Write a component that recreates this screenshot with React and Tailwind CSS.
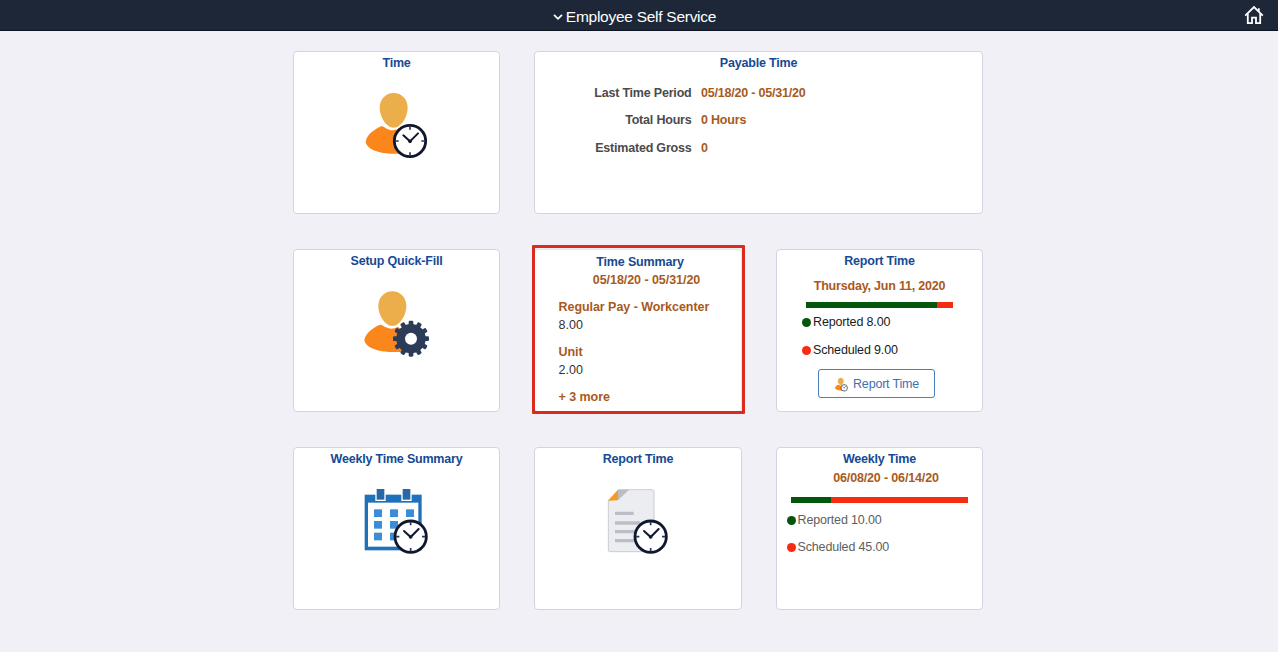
const titleClass =
  "text-center text-[12.5px] leading-4 font-bold tracking-[-0.2px] text-[#164a94]";

const accentClass = "text-[12.5px] font-bold text-[#a85a1c]";

const iconClass = "mx-auto block h-[72px] w-[70px]";

const PAYABLE_ROWS = [
  { label: "Last Time Period", value: "05/18/20 - 05/31/20" },
  { label: "Total Hours", value: "0 Hours" },
  { label: "Estimated Gross", value: "0" },
];

const SUMMARY_ROWS = [
  { label: "Regular Pay - Workcenter", value: "8.00" },
  { label: "Unit", value: "2.00" },
];

const GEAR_TEETH = Array.from({ length: 12 }, (_, i) => i * 30);

function Clock({ cx, cy }) {
  return (
    <g transform={`translate(${cx} ${cy})`} stroke="#10182f" fill="none">
      <circle r="47" fill="#fff" strokeWidth="8.5" />
      <path
        d="M0 -44v10M0 44v-10M-44 0h10M44 0h-10"
        stroke="#2a3756"
        strokeWidth="5"
      />
      <path d="M-20 -17L0 1L24 -23" strokeWidth="6" strokeLinecap="round" />
      <circle r="5.5" cy="1" fill="#10182f" stroke="none" />
    </g>
  );
}

function Person({ x = 0, y = 0 }) {
  return (
    <g transform={`translate(${x} ${y})`}>
      <path
        d="M94 139C70 149 50 166 47 185C50 208 88 221 131 221H168V152C158 150 151 149 146 145C136 153 122 152 112 147C105 144 100 138 94 139Z"
        fill="#fb861c"
      />
      <path
        d="M131 39C155 39 173 58 173 83C173 109 154 143 131 143C108 143 89 109 89 83C89 58 107 39 131 39Z"
        fill="#ecae4a"
        stroke="#fff"
        strokeWidth="7"
        paintOrder="stroke"
      />
    </g>
  );
}

function PersonClockIcon({ className = iconClass }) {
  return (
    <svg viewBox="36 27 210 216" className={className}>
      <Person />
      <Clock cx={180} cy={183} />
    </svg>
  );
}

function PersonGearIcon() {
  return (
    <svg viewBox="36 27 210 216" className={iconClass}>
      <Person x={-4} y={-5} />
      <g transform="translate(183 176)" fill="#2b3b58">
        <circle r="44" />
        {GEAR_TEETH.map((angle) => (
          <rect
            key={angle}
            x="-7"
            y="-54"
            width="14"
            height="16"
            rx="4"
            transform={`rotate(${angle})`}
          />
        ))}
        <circle r="18" fill="#fff" />
      </g>
    </svg>
  );
}

function CalendarClockIcon() {
  return (
    <svg viewBox="36 27 210 216" className={iconClass}>
      <rect x="44" y="50" width="171" height="167" fill="#1f71ba" />
      <rect x="54" y="74" width="151" height="132" fill="#fff" />
      {[80, 158].map((x) => (
        <rect
          key={x}
          x={x - 2}
          y="31"
          width="27"
          height="36"
          fill="#2768a6"
          stroke="#fff"
          strokeWidth="4"
        />
      ))}
      {[94, 129, 164].map((y) =>
        [72, 120, 168].map((x) => (
          <rect key={`${x}-${y}`} x={x} y={y} width="24" height="23" fill="#3a8dd6" />
        )),
      )}
      <Clock cx={182} cy={176} />
    </svg>
  );
}

function DocumentClockIcon() {
  return (
    <svg viewBox="39 27 210 216" className={iconClass}>
      <path
        d="M86 35H187Q192 35 192 40V216Q192 221 187 221H60Q55 221 55 216V68Z"
        fill="#ecedf1"
        stroke="#c9cdd5"
        strokeWidth="3"
      />
      <path d="M84 35H117L84 67Z" fill="#b9bdc6" />
      <path d="M54 68L84 35V67Z" fill="#f69a24" />
      <path
        d="M75 106H131M75 135H150M75 161H140M75 188H140"
        stroke="#bbbec7"
        strokeWidth="10"
      />
      <Clock cx={182} cy={176} />
    </svg>
  );
}

function Tile({ title, className = "", children }) {
  return (
    <section
      className={`relative h-[163px] rounded-[4px] border border-[#d3d5de] bg-white pt-[3px] ${className}`}
    >
      <h2 className={titleClass}>{title}</h2>
      {children}
    </section>
  );
}

function StatusBar({ reported, className }) {
  return (
    <div className={`h-1.5 bg-[#f52c12] ${className}`}>
      <div className="h-full bg-[#04560a]" style={{ width: `${reported}%` }} />
    </div>
  );
}

function Legend({ color, className = "", children }) {
  return (
    <div
      className={`flex items-center gap-0.5 text-[12.5px] leading-4 tracking-[-0.15px] ${className}`}
    >
      <span className={`size-[9px] shrink-0 rounded-full ${color}`} />
      {children}
    </div>
  );
}

export default function App() {
  return (
    <div className="h-[652px] w-[1278px] overflow-hidden bg-[#f0f0f6] font-['Liberation_Sans',Arial,sans-serif]">
      <header className="grid h-[31px] grid-cols-[1fr_auto_1fr] items-center border-b border-[#0c1422] bg-[#1d2737]">
        <span />
        <div className="flex items-center gap-[3px] pt-[3px] pr-[9px] text-[15.5px] leading-5 tracking-[-0.27px] text-white">
          <svg viewBox="0 0 10 6" className="h-1.5 w-2.5">
            <path
              d="M1 0.8L5 4.8L9 0.8"
              fill="none"
              stroke="#fff"
              strokeWidth="1.7"
            />
          </svg>
          <h1>Employee Self Service</h1>
        </div>
        <svg
          viewBox="0 0 20 20"
          className="mr-3.5 size-5 justify-self-end"
          fill="none"
          stroke="#fff"
          strokeWidth="1.8"
        >
          <path d="M1.2 10.6L10 2L18.8 10.6" />
          <path d="M3.8 8.5V18.2H8V12.6H12V18.2H16.2V8.5M14.8 6.2V3.2" />
        </svg>
      </header>

      <main className="ml-[293px] grid w-[690px] grid-cols-[207px_208px_207px] gap-x-[34px] gap-y-[35px] pt-5">
        <Tile title="Time">
          <div className="pt-[18px]">
            <PersonClockIcon />
          </div>
        </Tile>

        <Tile title="Payable Time" className="col-span-2">
          <dl className="mt-[9px] grid grid-cols-[156.5px_1fr] gap-x-[9.5px] text-[12.5px] leading-[27.3px] font-bold tracking-[-0.2px]">
            {PAYABLE_ROWS.map((row) => (
              <div key={row.label} className="contents">
                <dt className="text-right text-[#4b4b4b]">{row.label}</dt>
                <dd className="text-[#a85a1c]">{row.value}</dd>
              </div>
            ))}
          </dl>
        </Tile>

        <Tile title="Setup Quick-Fill">
          <div className="pt-5">
            <PersonGearIcon />
          </div>
        </Tile>

        <section className="relative h-[163px] rounded-[4px] border border-[#e4e4ec] bg-white pt-[3px] text-[12.5px] leading-[18px]">
          <h2 className="pl-1 text-center font-bold tracking-[-0.15px] text-[#164a94]">
            Time Summary
          </h2>
          <p className={`${accentClass} pl-[17px] text-center tracking-[-0.05px]`}>
            05/18/20 - 05/31/20
          </p>
          <div className="space-y-[9px] pt-[9px] pl-[23.5px]">
            {SUMMARY_ROWS.map((row) => (
              <div key={row.label}>
                <p className={`${accentClass} tracking-[-0.05px]`}>{row.label}</p>
                <p className="text-[#333]">{row.value}</p>
              </div>
            ))}
            <p className={`${accentClass} tracking-[-0.05px]`}>+ 3 more</p>
          </div>
          <div className="absolute -top-[5px] -right-1 -bottom-[3px] -left-[3px] rounded-[1px] border-[3px] border-[#d92b1e]" />
        </section>

        <Tile title="Report Time">
          <p className={`${accentClass} mt-[8.5px] text-center leading-4 tracking-[-0.2px]`}>
            Thursday, Jun 11, 2020
          </p>
          <StatusBar reported={89} className="mt-[8.5px] ml-[29px] w-[147px]" />
          <Legend color="bg-[#04560a]" className="mt-1.5 ml-[25px] text-[#1a1a1a]">
            Reported 8.00
          </Legend>
          <Legend color="bg-[#f52c12]" className="mt-3 ml-[25px] text-[#1a1a1a]">
            Scheduled 9.00
          </Legend>
          <button className="mt-[11px] ml-[41px] flex h-[29px] w-[117px] items-center justify-center gap-1 rounded-[3px] border border-[#4c7dbc] pt-px text-[12.5px] tracking-[-0.2px] text-[#3f6fae]">
            <PersonClockIcon className="h-[15px] w-[15px]" />
            Report Time
          </button>
        </Tile>

        <Tile title="Weekly Time Summary">
          <div className="pt-5">
            <CalendarClockIcon />
          </div>
        </Tile>

        <Tile title="Report Time">
          <div className="pt-5">
            <DocumentClockIcon />
          </div>
        </Tile>

        <Tile title="Weekly Time">
          <p className={`${accentClass} mt-[2.5px] pl-[13px] text-center leading-4 tracking-[-0.15px]`}>
            06/08/20 - 06/14/20
          </p>
          <StatusBar reported={22.5} className="mt-[11.5px] ml-3.5 w-[177px]" />
          <Legend color="bg-[#04560a]" className="mt-[9px] ml-[9.5px] text-[#606060]">
            Reported 10.00
          </Legend>
          <Legend color="bg-[#f52c12]" className="mt-[11px] ml-[9.5px] text-[#606060]">
            Scheduled 45.00
          </Legend>
        </Tile>
      </main>
    </div>
  );
}
